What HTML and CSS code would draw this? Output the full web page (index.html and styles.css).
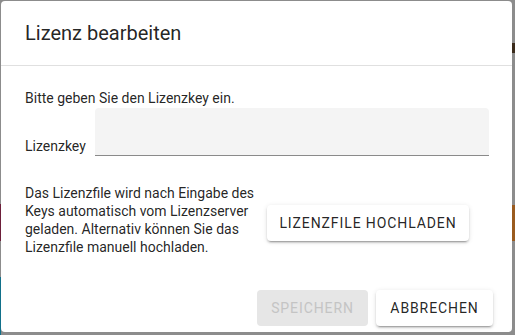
FILE: index.html
```html
<!DOCTYPE html>
<html lang="de">
<head>
  <meta charset="UTF-8" />
  <meta name="viewport" content="width=device-width, initial-scale=1.0" />
  <title>Lizenz bearbeiten</title>
  <link rel="stylesheet" href="styles.css">
</head>
<body>
  <div class="dialog">
    <h2 class="dialog-title">Lizenz bearbeiten</h2>

    <div class="dialog-content">
      <p class="intro">Bitte geben Sie den Lizenzkey ein.</p>

      <div class="key-row">
        <label for="license-key">Lizenzkey</label>
        <input type="text" id="license-key" class="key-input">
      </div>

      <div class="upload-row">
        <p class="upload-text">Das Lizenzfile wird nach Eingabe des Keys automatisch vom Lizenzserver geladen. Alternativ können Sie das Lizenzfile manuell hochladen.</p>
        <button class="btn btn-raised upload">Lizenzfile hochladen</button>
      </div>
    </div>

    <div class="dialog-actions">
      <button class="btn btn-disabled" disabled>Speichern</button>
      <button class="btn btn-raised">Abbrechen</button>
    </div>
  </div>
</body>
</html>
```

FILE: styles.css
```css
body {
  margin: 0;
  height: 335px;
  overflow: hidden;
  font-family: Roboto, 'Liberation Sans', sans-serif;
  color: rgba(0,0,0,0.87);
  background:
    linear-gradient(#6d1f3a, #6d1f3a) 0 204px / 1px 37px no-repeat,
    linear-gradient(#11708a, #11708a) 0 277px / 1px 58px no-repeat,
    linear-gradient(#9a5b1f, #9a5b1f) right 0 top 205px / 3px 36px no-repeat,
    linear-gradient(#3a2a1a, #3a2a1a) right 0 top 43px / 3px 10px no-repeat,
    #8c8c8c;
}
.dialog {
  margin: 1px;
  width: 511px;
  height: 331px;
  background-color: white;
  border-radius: 4px;
  display: flex;
  flex-direction: column;
  box-sizing: border-box;
}
.dialog-title {
  margin: 0;
  padding: 16px 24px;
  font-size: 20px;
  font-weight: 400;
  line-height: 32px;
  border-bottom: 1px solid #e0e0e0;
}
.dialog-content {
  padding: 22px 23px 0 24px;
  font-size: 14px;
  line-height: 20px;
}
.intro {
  margin: 0;
}
.key-row {
  display: flex;
  align-items: flex-end;
  gap: 9px;
}
.key-input {
  flex: 1;
  height: 48px;
  box-sizing: border-box;
  border: none;
  border-bottom: 1px solid #8a8a8a;
  border-radius: 4px 4px 0 0;
  background-color: #f4f4f4;
  font: inherit;
  padding: 0 12px;
  outline: none;
}
.upload-row {
  display: flex;
  align-items: flex-start;
  gap: 6px;
  margin-top: 28px;
}
.upload-text {
  margin: 0;
  width: 236px;
  flex-shrink: 0;
  line-height: 18px;
}
.btn {
  height: 36px;
  padding: 0 10px;
  border: none;
  border-radius: 4px;
  font-family: Roboto, 'Liberation Sans', sans-serif;
  font-size: 14px;
  font-weight: 400;
  letter-spacing: 0.9px;
  text-transform: uppercase;
  white-space: nowrap;
  cursor: pointer;
}
.btn-raised {
  background-color: white;
  color: rgba(0,0,0,0.87);
  box-shadow: 0 3px 1px -2px rgba(0,0,0,0.2), 0 2px 2px 0 rgba(0,0,0,0.14), 0 1px 5px 0 rgba(0,0,0,0.12);
}
.btn-disabled {
  background-color: #e6e6e6;
  color: #c4c4c4;
  cursor: default;
}
.upload {
  margin-top: 21px;
  width: 202px;
}
.dialog-actions {
  margin-top: auto;
  padding: 0 19px 6px;
  display: flex;
  justify-content: flex-end;
  gap: 8px;
}
.dialog-actions .btn-disabled {
  width: 111px;
}
.dialog-actions .btn-raised {
  width: 117px;
}
```
